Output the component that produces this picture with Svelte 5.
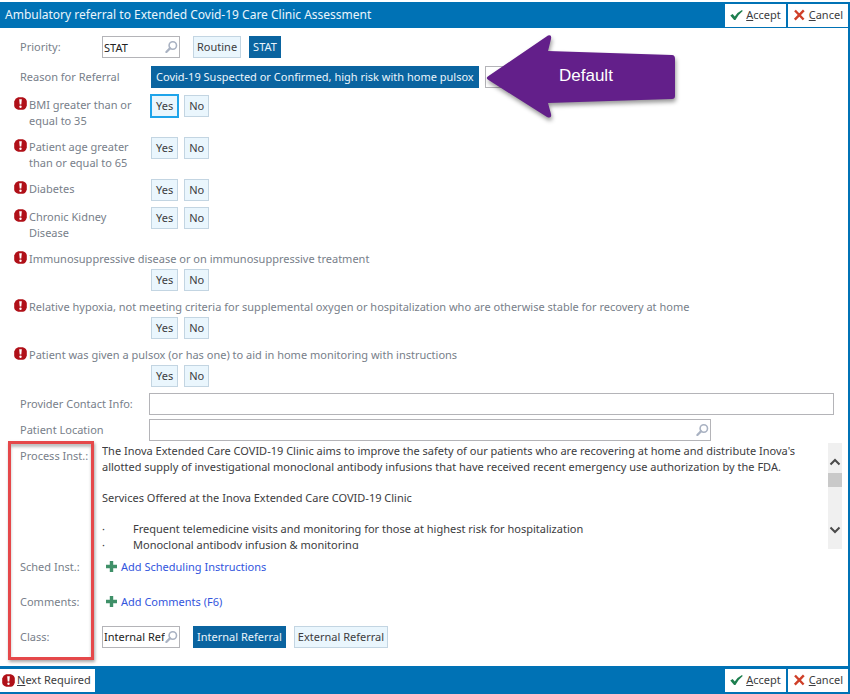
<script>
  const PRIORITIES = ["Routine", "STAT"];
  const CLASSES = ["Internal Referral", "External Referral"];

  let priority = $state("STAT");
  let referralClass = $state("Internal Referral");
  let contact = $state("");
  let location = $state("");
  let reasonSelected = $state(true);

  let questions = $state([
    { id: "bmi", text: "BMI greater than or equal to 35", answer: null },
    { id: "age", text: "Patient age greater than or equal to 65", answer: null },
    { id: "diabetes", text: "Diabetes", answer: null },
    { id: "kidney", text: "Chronic Kidney Disease", answer: null },
    { id: "immuno", text: "Immunosuppressive disease or on immunosuppressive treatment", answer: null, wide: true },
    {
      id: "hypoxia",
      text: "Relative hypoxia, not meeting criteria for supplemental oxygen or hospitalization who are otherwise stable for recovery at home",
      answer: null,
      wide: true,
    },
    { id: "pulsox", text: "Patient was given a pulsox (or has one) to aid in home monitoring with instructions", answer: null, wide: true },
  ]);

  // the question that has the keyboard focus ring on its first answer
  let current = $state("bmi");

  function answer(question, value) {
    question.answer = value;
    current = question.id;
  }
</script>

{#snippet required()}
  <svg class="required" viewBox="0 0 13 13" aria-hidden="true">
    <path d="M4.2 .2h4.6Q12.800 1.500 12.800 4.500v4Q11.500 12.800 8.800 12.800H4.200Q.200 11.500 .200 8.500v-4Q1 1.200 4.200 .2z" fill="#b01018" />
    <path d="M5.2 2.2h2.600L7.300 7.600H5.700z" fill="#fff" />
    <circle cx="6.5" cy="9.8" r="1.2" fill="#fff" />
  </svg>
{/snippet}

{#snippet magnifier()}
  <svg class="magnifier" viewBox="0 0 14 14" aria-hidden="true">
    <circle cx="8.4" cy="5.4" r="4" fill="none" stroke="#a9b2c2" stroke-width="1.7" />
    <path d="M5.3 8.5L1.5 12.3" stroke="#a9b2c2" stroke-width="2.4" stroke-linecap="round" />
  </svg>
{/snippet}

{#snippet plus()}
  <svg class="plus" viewBox="0 0 11 11" aria-hidden="true">
    <path d="M3.8 0h3.400v3.800H11v3.400H7.200V11H3.800V7.200H0V3.800h3.800z" fill="#3f9068" />
  </svg>
{/snippet}

{#snippet actions()}
  <div class="actions">
    <button class="bar-btn">
      <svg class="mark" viewBox="0 0 13 12" aria-hidden="true">
        <path d="M0.3 6.4L2.6 5l2.2 2.400Q7.600 3.200 12 1l.7 1Q8.400 5.400 5.400 11H4.100z" fill="#1d7f4f" />
      </svg>
      <span><u>A</u>ccept</span>
    </button>
    <button class="bar-btn">
      <svg class="mark" viewBox="0 0 13 12" aria-hidden="true">
        <path d="M2 1.5l8.6 9M10.8 1.3L1.8 10.6" stroke="#cf3f28" stroke-width="2.4" fill="none" />
      </svg>
      <span><u>C</u>ancel</span>
    </button>
  </div>
{/snippet}

<main class="window">
  <header class="bar top">
    <h1>Ambulatory referral to Extended Covid-19 Care Clinic Assessment</h1>
    {@render actions()}
  </header>

  <div class="form">
    <div class="row narrow">
      <label for="priority">Priority:</label>
      <div class="controls">
        <div class="lookup short">
          <input id="priority" bind:value={priority} />
          {@render magnifier()}
        </div>
        {#each PRIORITIES as option}
          <button class="choice" class:selected={priority === option} onclick={() => (priority = option)}>{option}</button>
        {/each}
      </div>
    </div>

    <div class="row reason">
      <span class="label">Reason for Referral</span>
      <div class="controls answers">
        <button class="choice" class:selected={reasonSelected} onclick={() => (reasonSelected = !reasonSelected)}>
          Covid-19 Suspected or Confirmed, high risk with home pulsox
        </button>
        <button class="choice other" aria-label="Other reason"></button>
        <div class="callout">
          <svg viewBox="0 0 194 92" aria-hidden="true">
            <path
              d="M3.5 45L63 4.5Q67 3 66 8L63 20L187 24Q190 24 190 28V65Q190 68 187 68L63 72L66 83Q67 88 62 86L3.5 49Q0 47 3.5 45z"
              fill="#631f8a"
            />
          </svg>
          <span>Default</span>
        </div>
      </div>
    </div>

    {#each questions as question (question.id)}
      <div class="row question" class:wide={question.wide} role="group" aria-labelledby={question.id}>
        <div class="prompt">
          {@render required()}
          <span id={question.id}>{question.text}</span>
        </div>
        <div class="controls answers">
          {#each ["Yes", "No"] as value}
            <button
              class="choice"
              class:selected={question.answer === value}
              class:focused={current === question.id && value === "Yes"}
              onclick={() => answer(question, value)}>{value}</button
            >
          {/each}
        </div>
      </div>
    {/each}

    <div class="row">
      <label for="contact">Provider Contact Info:</label>
      <div class="lookup"><input id="contact" bind:value={contact} /></div>
    </div>
    <div class="row location">
      <label for="location">Patient Location</label>
      <div class="lookup part">
        <input id="location" bind:value={location} />
        {@render magnifier()}
      </div>
    </div>

    <section class="details">
      <div class="row narrow process">
        <span class="label">Process Inst.:</span>
        <div class="instructions">
          <div class="text">
            <p>
              The Inova Extended Care COVID-19 Clinic aims to improve the safety of our patients who are recovering at home and distribute Inova's
              allotted supply of investigational monoclonal antibody infusions that have received recent emergency use authorization by the FDA.
            </p>
            <p>Services Offered at the Inova Extended Care COVID-19 Clinic</p>
            <ul>
              <li>Frequent telemedicine visits and monitoring for those at highest risk for hospitalization</li>
              <li>Monoclonal antibody infusion &amp; monitoring</li>
            </ul>
          </div>
          <div class="scrollbar">
            <button aria-label="Scroll up">
              <svg viewBox="0 0 12 8"><path d="M1.5 6.5L6 2l4.5 4.5" /></svg>
            </button>
            <div class="thumb"></div>
            <button aria-label="Scroll down">
              <svg viewBox="0 0 12 8"><path d="M1.5 1.5L6 6l4.5-4.5" /></svg>
            </button>
          </div>
        </div>
      </div>

      <div class="row narrow tall">
        <span class="label">Sched Inst.:</span>
        <a href="#scheduling">{@render plus()}Add Scheduling Instructions</a>
      </div>
      <div class="row narrow tall">
        <span class="label">Comments:</span>
        <a href="#comments">{@render plus()}Add Comments (F6)</a>
      </div>
      <div class="row narrow tall">
        <label for="class">Class:</label>
        <div class="controls">
          <div class="lookup short">
            <input id="class" value={referralClass.slice(0, 12)} />
            {@render magnifier()}
          </div>
          {#each CLASSES as option}
            <button class="choice" class:selected={referralClass === option} onclick={() => (referralClass = option)}>{option}</button>
          {/each}
        </div>
      </div>
    </section>
  </div>

  <footer class="bar bottom">
    <button class="bar-btn next">{@render required()}<span><u>N</u>ext Required</span></button>
    {@render actions()}
  </footer>
</main>

<style>
  :global(body) {
    margin: 0;
    background: #fff;
  }

  .window {
    margin-top: 2px;
    border-right: 2px solid #0072b5;
    font-family: "Noto Sans", "Open Sans", sans-serif;
    font-size: 11px;
    line-height: 16px;
    color: #3c3c40;
  }

  button,
  input {
    font: inherit;
    color: inherit;
    box-sizing: border-box;
  }

  button {
    cursor: pointer;
  }

  .bar {
    display: flex;
    align-items: center;
    justify-content: space-between;
    background: #0072b5;
  }

  .top {
    height: 26px;
  }

  .bottom {
    height: 28px;
  }

  h1 {
    margin: 0;
    padding-left: 5px;
    font-size: 12px;
    font-weight: 400;
    color: #eaf5fc;
  }

  .actions {
    display: flex;
    gap: 2px;
  }

  .bar-btn {
    display: flex;
    align-items: center;
    gap: 3px;
    height: 23px;
    padding: 0 5px;
    border: none;
    background: #fff;
  }

  .next {
    padding: 0 4px 0 2px;
    gap: 2px;
  }

  .mark {
    width: 13px;
    height: 12px;
  }

  .required {
    flex: none;
    width: 13px;
    height: 13px;
  }

  .form {
    display: flex;
    flex-direction: column;
    gap: 6px;
    padding: 8px 0 12px;
  }

  .row {
    display: grid;
    grid-template-columns: 129px 1fr;
    align-items: center;
    padding: 0 14px 0 20px;
  }

  .row.narrow {
    grid-template-columns: 82px 1fr;
    padding-right: 6px;
  }

  .row.reason {
    margin: 2px 0 1px;
  }

  label,
  .label,
  .prompt {
    color: #78808a;
  }

  .controls {
    display: flex;
    gap: 8px;
  }

  .answers {
    position: relative;
    gap: 6px;
    padding-left: 2px;
  }

  .choice {
    height: 22px;
    padding: 0 3px;
    border: 1px solid #c3d5e2;
    background: #eaf6fd;
    white-space: nowrap;
  }

  .answers .choice {
    padding: 0 4px;
  }

  .choice.selected {
    border-color: #0a64a0;
    background: #0a64a0;
    color: #eaf5fc;
  }

  .choice.focused {
    outline: 1px solid #1fa4ea;
    border-color: #1fa4ea;
  }

  .choice.other {
    width: 26px;
    border-color: #b4b4b8;
    background: #fff;
  }

  .lookup {
    display: flex;
    align-items: center;
    height: 22px;
    box-sizing: border-box;
    border: 1px solid #b4b4b8;
    background: #fff;
  }

  .lookup input {
    flex: 1;
    min-width: 0;
    height: 20px;
    padding: 0 0 0 1px;
    border: none;
    background: none;
    outline: none;
    color: #222;
  }

  .lookup.short {
    width: 78px;
    margin-right: 5px;
  }

  .lookup.part {
    width: 82%;
  }

  .magnifier {
    flex: none;
    width: 13px;
    height: 14px;
    margin-right: 1px;
  }

  .callout {
    position: absolute;
    left: 336px;
    top: -35px;
    width: 194px;
    height: 92px;
  }

  .callout svg {
    display: block;
    filter: drop-shadow(1px 3px 2px rgba(0, 0, 0, 0.4));
  }

  .callout span {
    position: absolute;
    left: 74px;
    top: 37px;
    font-family: "Liberation Sans", Arial, sans-serif;
    font-size: 17px;
    color: #fff;
  }

  .question {
    grid-template-columns: 135px 1fr;
    align-items: start;
    padding-left: 14px;
  }

  .question.wide {
    grid-template-columns: 1fr;
  }

  .question.wide .answers {
    padding-left: 137px;
  }

  .prompt {
    display: flex;
    gap: 2px;
    padding: 2px 10px 2px 0;
  }

  .location {
    margin-top: -2px;
  }

  /* highlighted frame round the instruction labels */
  .details {
    position: relative;
    margin-top: -4px;
  }

  .details::before {
    content: "";
    position: absolute;
    left: 8px;
    top: -2px;
    bottom: -6px;
    width: 80px;
    border: 3px solid #e5484a;
    box-shadow:
      1px 2px 3px rgba(0, 0, 0, 0.35),
      inset 0 3px 3px rgba(0, 0, 0, 0.25);
    pointer-events: none;
  }

  .process {
    height: 106px;
  }

  .process .label {
    align-self: start;
    padding-top: 5px;
  }

  .instructions {
    display: flex;
    justify-content: space-between;
    height: 106px;
    overflow: hidden;
  }

  .text {
    flex: 1;
    min-width: 0;
    padding-right: 16px;
  }

  .text p {
    margin: 0 0 15px;
  }

  .text ul {
    margin: 0;
    padding: 0;
    list-style: none;
  }

  .text li {
    display: flex;
  }

  .text li::before {
    content: "·";
    flex: none;
    width: 31px;
  }

  .scrollbar {
    display: flex;
    flex-direction: column;
    width: 14px;
    background: #f0f0f0;
  }

  .scrollbar button {
    display: flex;
    align-items: center;
    height: 30px;
    padding: 8px 1px 0;
    border: none;
    background: none;
  }

  .scrollbar button:last-child {
    margin-top: auto;
    height: 38px;
    padding: 0 1px;
  }

  .scrollbar svg {
    width: 12px;
    height: 8px;
  }

  .scrollbar path {
    fill: none;
    stroke: #4a4a4a;
    stroke-width: 2;
  }

  .thumb {
    height: 14px;
    background: #c9c9c9;
  }

  .tall {
    height: 35px;
  }

  a {
    display: flex;
    align-items: center;
    gap: 4px;
    padding-left: 4px;
    color: #3355dd;
    text-decoration: none;
  }

  .plus {
    width: 11px;
    height: 11px;
  }
</style>
